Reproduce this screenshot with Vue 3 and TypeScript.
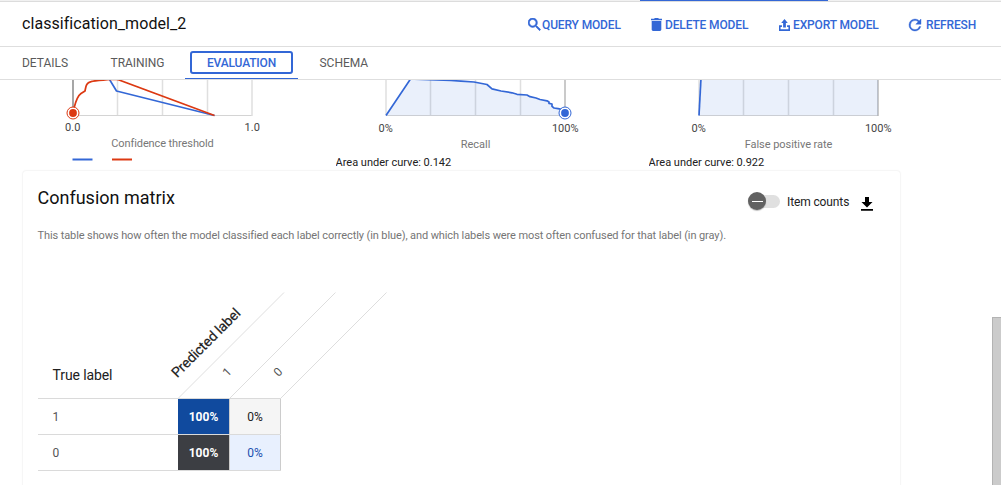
<script setup lang="ts">
interface Tab { label: string; active?: boolean }
interface Action { label: string; icon: string; cls: string; box: string }
interface Chart {
  id: string
  min: string
  max: string
  title: string
  area?: string
  fill?: string
  lines: { d: string; color: string }[]
  marker?: { x: number; y: number; color: string }
}

const actions: Action[] = [
  { label: 'QUERY MODEL', cls: 'query', box: '3 3 18 18', icon: 'M15.5 14h-.79l-.28-.27A6.47 6.47 0 0 0 16 9.5 6.5 6.5 0 1 0 9.5 16c1.61 0 3.09-.59 4.23-1.57l.27.28v.79l5 4.99L20.49 19l-4.99-5zm-6 0C7.01 14 5 11.99 5 9.5S7.01 5 9.5 5 14 7.01 14 9.5 11.99 14 9.5 14z' },
  { label: 'DELETE MODEL', cls: 'delete', box: '4 3 16 18', icon: 'M5 19c0 1.1.9 2 2 2h10c1.1 0 2-.9 2-2V7H5v12zM20 4h-4.5l-1-1h-5l-1 1H4v2h16V4z' },
  { label: 'EXPORT MODEL', cls: 'export', box: '0 0 12 12', icon: 'M6 0 L9.6 4 H7.5 V8.5 H4.5 V4 H2.4 Z M0 6.3 H3.2 V8 H1.7 V10.2 H10.3 V8 H8.8 V6.3 H12 V12 H0 Z' },
  { label: 'REFRESH', cls: 'refresh', box: '4 4 16 16', icon: 'M17.65 6.35A7.96 7.96 0 0 0 12 4a8 8 0 1 0 7.73 10h-2.08A6 6 0 1 1 12 6c1.66 0 3.14.69 4.22 1.78L13 11h7V4l-2.35 2.35z' },
]

const tabs: Tab[] = [
  { label: 'DETAILS' },
  { label: 'TRAINING' },
  { label: 'EVALUATION', active: true },
  { label: 'SCHEMA' },
]

const blue = '#3367d6'
const red = '#dc3912'
const grid = [94.5, 139.5, 184.5]

const prCurve = 'M50 35.5 L74.5 -1 L115 .5 L125 1.2 L138 2 L151 4.5 L156 8.8 L165 11 L176 12.8 L181 14.3 L191 15 L194 16.7 L200 18 L204 19.5 L211 20.8 L213 22 L213 23.4 L216 24 L216 26.4 L218 28 L222 28.6 L229 30'
const charts: Chart[] = [
  {
    id: 'threshold', min: '0.0', max: '1.0', title: 'Confidence threshold',
    lines: [
      { color: blue, d: 'M85 -3 L93.5 11 L191.5 35.5' },
      { color: red, d: 'M50 32 C52 25 53 17 58 13.5 L62 11 C63 6 63 3 68 1.6 C72 .3 80 .2 87 -.5 H94 L96 0 L191.5 35.5' },
    ],
    marker: { x: 50, y: 33, color: red },
  },
  {
    id: 'recall', min: '0%', max: '100%', title: 'Recall', area: '0.142',
    fill: prCurve + ' V35.5 H50 Z',
    lines: [{ color: blue, d: prCurve }],
    marker: { x: 229, y: 33, color: blue },
  },
  {
    id: 'roc', min: '0%', max: '100%', title: 'False positive rate', area: '0.922',
    fill: 'M50 35.5 L52 -2 H229 V35.5 Z',
    lines: [{ color: blue, d: 'M50 35.5 L52 -2' }],
  },
]

const rows = [
  { label: '1', cells: [{ text: '100%', cls: 'navy' }, { text: '0%', cls: 'pale' }] },
  { label: '0', cells: [{ text: '100%', cls: 'dark' }, { text: '0%', cls: 'sky' }] },
]
</script>

<template>
  <div class="page">
    <div class="strip"><div class="progress"></div></div>
    <header class="header">
      <h1 class="name">classification_model_2</h1>
      <div v-for="a in actions" :key="a.label" class="action" :class="a.cls">
        <svg :viewBox="a.box" preserveAspectRatio="none"><path :d="a.icon" /></svg>
        <span>{{ a.label }}</span>
      </div>
    </header>
    <nav class="tabs">
      <div v-for="t in tabs" :key="t.label" class="tab" :class="[t.label.toLowerCase(), { active: t.active }]">
        <span>{{ t.label }}</span>
      </div>
    </nav>
    <main class="content">
      <div class="charts">
        <svg v-for="c in charts" :key="c.id" class="chart" width="313" height="91" viewBox="0 0 313 91">
          <line v-for="g in grid" :key="g" :x1="g" :x2="g" y1="0" y2="35" class="grid" />
          <path d="M50 35.5 H229" class="base" />
          <line x1="50" x2="50" y1="0" y2="35" :class="c.id === 'threshold' ? 'cursor' : 'grid'" />
          <line x1="229" x2="229" y1="0" y2="36" :class="c.id === 'threshold' ? 'grid' : 'edge'" />
          <path v-if="c.fill" :d="c.fill" class="fill" />
          <path v-for="l in c.lines" :key="l.color" :d="l.d" :stroke="l.color" class="curve" />
          <template v-if="c.marker">
            <circle :cx="c.marker.x" :cy="c.marker.y" r="6" fill="#fff" :stroke="c.marker.color" stroke-width="1" />
            <circle :cx="c.marker.x" :cy="c.marker.y" r="3.9" :fill="c.marker.color" />
          </template>
          <text x="49.7" :y="c.area ? 52 : 51" class="tick">{{ c.min }}</text>
          <text x="229.2" :y="c.area ? 52 : 51" class="tick">{{ c.max }}</text>
          <text x="139.5" :y="c.area ? 68 : 67" class="axis" :class="c.id">{{ c.title }}</text>
          <text v-if="c.area" x="-.5" y="86" class="auc">Area under curve: {{ c.area }}</text>
          <template v-else>
            <path d="M49.5 79.5 H69.5" :stroke="blue" stroke-width="2" />
            <path d="M89 79.5 H109" :stroke="red" stroke-width="2" />
          </template>
        </svg>
      </div>
      <section class="card">
        <div class="card-head">
          <h2 class="card-title">Confusion matrix</h2>
          <div class="toggle"><div class="knob"></div></div>
          <span class="toggle-label">Item counts</span>
          <svg class="download" width="12" height="14" viewBox="0 0 12 14"><path d="M4 0 H8 V5 H11.5 L6 10.5 L.5 5 H4 Z M0 12 H12 V13.7 H0 Z" /></svg>
        </div>
        <p class="note">This table shows how often the model classified each label correctly (in blue), and which labels were most often confused for that label (in gray).</p>
        <div class="matrix">
          <div class="matrix-head">
            <span class="true-label">True label</span>
            <svg class="slant" width="230" height="107" viewBox="0 0 230 107">
              <path d="M20 106.5 L126 .5 M71.5 106.5 L177.5 .5 M122.5 106.5 L228.5 .5" />
              <text class="predicted" transform="translate(19.2 86.3) rotate(-45)">Predicted label</text>
              <text transform="translate(69.6 85.2) rotate(-45)">1</text>
              <text transform="translate(120.6 85.2) rotate(-45)">0</text>
            </svg>
          </div>
          <div v-for="r in rows" :key="r.label" class="row">
            <div class="row-label">{{ r.label }}</div>
            <div v-for="(c, i) in r.cells" :key="i" class="cell" :class="c.cls">{{ c.text }}</div>
          </div>
        </div>
      </section>
      <div class="scrollbar"></div>
    </main>
  </div>
</template>

<style>
body { margin: 0; overflow: hidden; }
</style>

<style scoped>
* { box-sizing: border-box; }
.page { width: 1001px; height: 485px; display: flex; flex-direction: column; overflow: hidden; background: #fff; font-family: Roboto, "Liberation Sans", sans-serif; }
.strip { height: 2px; flex: none; background: #f1f1f1; border-bottom: 1px solid #dcdcdc; }
.progress { width: 188px; height: 1px; margin-left: 640px; background: #3367d6; }
.header { height: 45px; flex: none; display: flex; align-items: center; padding: 0 25px 0 22px; border-bottom: 1px solid #dedede; }
.name { margin: 0 auto 0 0; font-size: 16px; font-weight: 400; color: #111; line-height: 20px; letter-spacing: .06px; }
.action { display: flex; align-items: center; color: #3367d6; font-size: 12px; font-weight: 500; line-height: 16px; white-space: nowrap; padding-top: 2px; letter-spacing: -.14px; }
.action svg { flex: none; fill: currentColor; margin-top: -1px; }
.query { width: 123px; }
.query svg { width: 13px; height: 13px; margin-right: 1px; stroke: currentColor; stroke-width: .8; }
.delete { width: 128px; }
.delete svg { width: 11px; height: 13px; margin-right: 3px; }
.export { width: 130px; }
.export svg { width: 11px; height: 12px; margin-right: 3px; }
.refresh { width: 67px; }
.refresh svg { width: 12px; height: 12px; margin-right: 5px; stroke: currentColor; stroke-width: .5; overflow: visible; }
.tabs { height: 33px; flex: none; display: flex; border-bottom: 1px solid #dedede; padding-left: 22px; color: #5a5a5a; font-size: 12px; font-weight: 400; line-height: 16px; }
.tab { padding-top: 8px; letter-spacing: -.03px; }
.details { width: 88.5px; }
.training { width: 74.5px; }
.evaluation { width: 113px; height: 32px; padding: 4px 5px 0; border-bottom: 1px solid #3367d6; letter-spacing: -.15px; }
.evaluation span { display: block; height: 23px; border: 2px solid #3367d6; border-radius: 3px; color: #3367d6; text-align: center; font-weight: 500; line-height: 19px; padding-top: 1px; }
.schema { padding-left: 21.5px; }
.content { flex: 1; min-height: 0; position: relative; overflow: hidden; }
.charts { height: 91px; display: flex; padding-left: 23px; }
.chart { flex: none; display: block; overflow: hidden; }
.grid { stroke: #dfdfdf; stroke-width: 1.5; }
.base { stroke: #d4d4d4; stroke-width: 1; }
.cursor { stroke: #777; stroke-width: 1.3; }
.edge { stroke: #b8b8b8; stroke-width: 1.5; }
.fill { fill: #3367d6; fill-opacity: .1; }
.curve { fill: none; stroke-width: 1.7; stroke-linejoin: round; }
.tick { font-size: 11px; fill: #444; text-anchor: middle; }
.axis { font-size: 11px; fill: #777; text-anchor: middle; }
.axis.threshold { letter-spacing: -.1px; }
.axis.roc { letter-spacing: -.05px; }
.auc { font-size: 11px; fill: #212121; }
.card { width: 877px; height: 420px; margin-left: 23px; border-radius: 3px; background: #fff; box-shadow: 0 0 2px rgba(0, 0, 0, .14); padding: 0 15px; }
.card-head { height: 56px; display: flex; align-items: center; padding-right: 12px; }
.card-title { margin: 0 auto 2px -.5px; font-size: 18px; font-weight: 400; color: #111; line-height: 24px; }
.toggle { width: 30px; height: 13px; border-radius: 7px; background: #e0e0e0; margin: 5px 7px 0 0; display: flex; align-items: center; }
.knob { width: 18px; height: 18px; flex: none; margin: -1px 0 0 -2px; border-radius: 50%; background: #616161; box-shadow: 0 1px 1px rgba(0, 0, 0, .25); display: flex; align-items: center; justify-content: center; }
.knob::after { content: ""; width: 11px; height: 1px; background: #fff; }
.toggle-label { font-size: 12px; color: #222; line-height: 16px; padding-top: 6px; width: 74px; letter-spacing: -.12px; }
.download { margin-top: 9px; fill: #000; }
.note { margin: 1px 0 0 -.5px; font-size: 11px; line-height: 16px; color: #757575; white-space: nowrap; letter-spacing: -.101px; }
.matrix { margin-top: 48px; width: 243px; }
.matrix-head { height: 107px; display: flex; align-items: flex-end; border-bottom: 1px solid #dadada; }
.true-label { width: 120px; flex: none; padding: 0 0 14px 14.5px; font-size: 14px; line-height: 18px; color: #212121; letter-spacing: -.1px; }
.slant { flex: none; overflow: visible; margin-bottom: -1px; }
.slant path { stroke: #dedede; stroke-width: 1; fill: none; }
.slant text { font-size: 12px; fill: #555; }
.slant .predicted { font-size: 14px; fill: #212121; letter-spacing: -.13px; stroke: #212121; stroke-width: .2px; }
.row { height: 36px; display: flex; border-bottom: 1px solid #dadada; font-size: 12px; line-height: 37px; }
.row-label { width: 140px; padding-left: 14.5px; color: #555; }
.cell { height: 35px; text-align: center; width: 51px; }
.cell + .cell { width: 52px; border-right: 1px solid #ccc; border-left: 1px solid #ccc; }
.navy { background: #104a9e; color: #fff; font-weight: 700; }
.dark { background: #3c3e43; color: #fff; font-weight: 700; }
.pale { background: #f5f5f5; color: #212121; }
.sky { background: #e8f0fe; color: #1b50b0; }
.scrollbar { position: absolute; right: 0; top: 237px; width: 9px; height: 168px; background: #cbcbcb; border: solid #b3b3b3; border-width: 1px 0 0 1px; }
</style>
